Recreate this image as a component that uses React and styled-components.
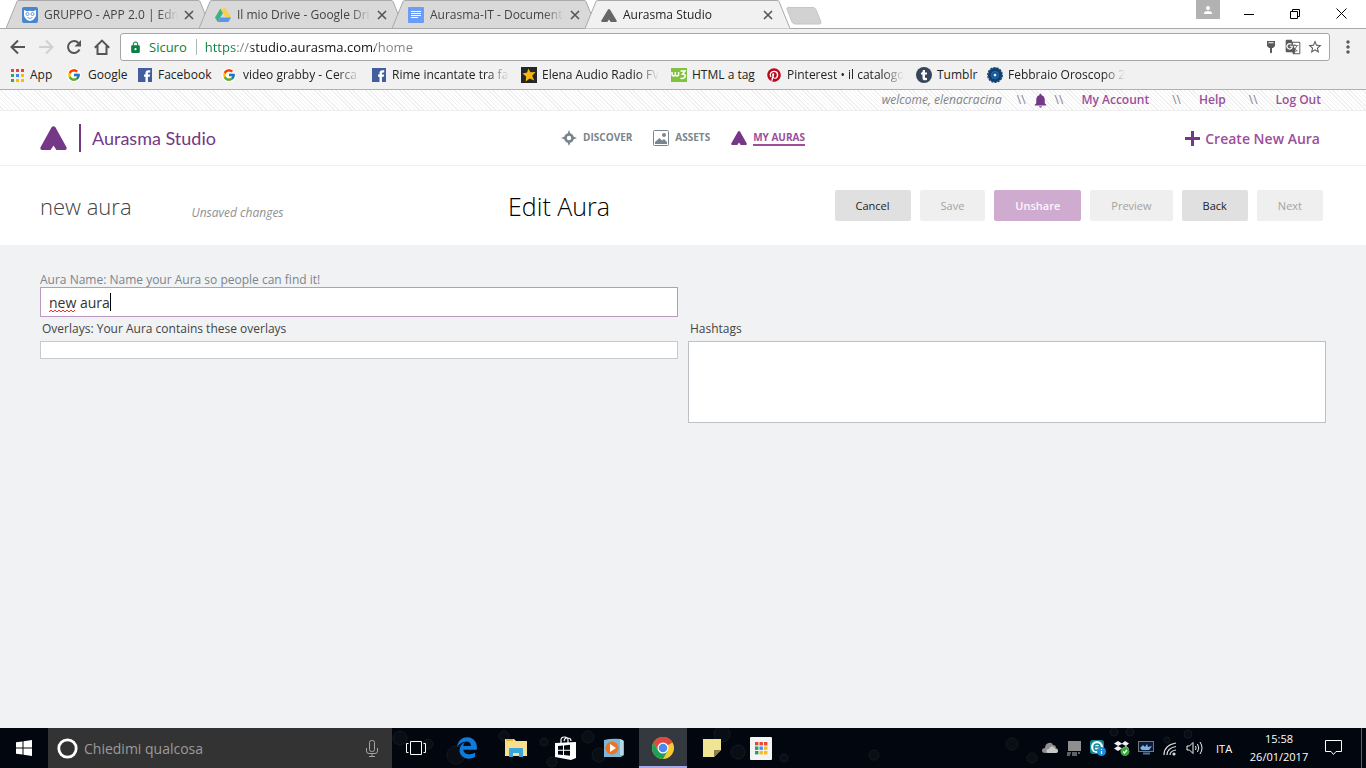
import React from "react";
import styled, { createGlobalStyle, css } from "styled-components";
import { FcGoogle } from "react-icons/fc";
import { FaPinterest, FaEdgeLegacy } from "react-icons/fa6";
import { MdLock, MdStarBorder, MdMoreVert, MdNotifications, MdPerson, MdGTranslate } from "react-icons/md";

const ui = `"Open Sans", "Noto Sans", sans-serif`;
const purple = "#743886";
const link = "#9b4f9b";

const Global = createGlobalStyle`
  * { box-sizing: border-box; }
  html, body, #root { height: 100%; }
  body { margin: 0; font-family: ${ui}; font-size: 12px; background: #f1f2f4; }
  button, input, textarea { font: inherit; }
  button { border: 0; padding: 0; background: none; color: inherit; }
  a { color: inherit; text-decoration: none; }
  ul { list-style: none; margin: 0; padding: 0; }
  svg { display: block; flex: none; }
`;

const Screen = styled.div`
  min-height: 100%;
  display: flex;
  flex-direction: column;
`;

/* ---------- browser chrome ---------- */

const TabStrip = styled.div`
  height: 29px;
  display: flex;
  justify-content: space-between;
  background: #fff;
  border-bottom: 1px solid #a9a9a9;
`;

const Tabs = styled.ul`
  display: flex;
  height: 29px;
  padding-left: 18px;
`;

const Tab = styled.li`
  position: relative;
  z-index: ${(p) => (p.$active ? 2 : 0)};
  width: 205px;
  height: 29px;
  margin-left: -12px;
  padding: 1px 17px 0 16px;
  display: flex;
  align-items: center;
  color: ${(p) => (p.$active ? "#222" : "#444")};
`;

const TabShape = styled.svg`
  position: absolute;
  inset: 0;
  z-index: -1;
`;

const TabTitle = styled.span`
  flex: 1;
  margin: 0 6px;
  overflow: hidden;
  white-space: nowrap;
  line-height: 16px;
  mask-image: linear-gradient(90deg, #000 calc(100% - 20px), transparent);
`;

const NewTab = styled.button`
  margin: 7px 0 0 -4px;
  height: 17px;
`;

const WindowControls = styled.div`
  display: flex;
  height: 28px;
  padding-right: 2px;
`;

const Profile = styled.button`
  width: 24px;
  height: 19px;
  margin-right: 6px;
  display: grid;
  place-items: center;
  color: #fff;
  background: #b2b2b2;
`;

const WindowButton = styled.button`
  width: 46px;
  height: 27px;
  display: grid;
  place-items: center;
`;

const Toolbar = styled.div`
  height: 36px;
  padding: 4px 10px 4px 10px;
  display: flex;
  align-items: center;
  background: #f1f1f1;
`;

const NavButton = styled.button`
  width: 16px;
  height: 16px;
  margin-right: 12px;
`;

const Omnibox = styled.div`
  flex: 1;
  height: 28px;
  margin: 0 10px 0 -2px;
  padding: 0 6px 0 8px;
  display: flex;
  align-items: center;
  background: #fff;
  border: 1px solid #a6a6a6;
  border-radius: 3px;
`;

const Secure = styled.span`
  margin-left: 7px;
  padding-right: 9px;
  font-size: 13px;
  line-height: 16px;
  color: #0b8043;
  border-right: 1px solid #b5b5b5;
`;

const Url = styled.input`
  flex: 1;
  margin-left: 8px;
  padding: 0;
  border: 0;
  outline: 0;
  font-size: 13px;
  line-height: 20px;
  color: transparent;
  background: linear-gradient(90deg, #0b8043 31px, #808080 31px 46px, #111 46px 170px, #808080 170px);
  background-clip: text;
`;

const OmniIcons = styled.div`
  display: flex;
  align-items: center;
  gap: 6px;
  color: #5a5a5a;
`;

const MenuButton = styled.button`
  width: 16px;
  color: #5a5a5a;
  display: grid;
  place-content: center;
`;

const Bookmarks = styled.ul`
  height: 25px;
  padding: 0 10px 4px;
  display: flex;
  align-items: center;
  background: #f1f1f1;
  border-bottom: 1px solid #b0b0b0;
`;

const Bookmark = styled.li`
  width: ${(p) => p.$w}px;
  a {
    display: flex;
    align-items: center;
    gap: 5px;
    color: #222;
    line-height: 16px;
  }
  span {
    flex: 1;
    margin-right: ${(p) => (p.$fade ? 12 : 0)}px;
    overflow: ${(p) => (p.$fade ? "hidden" : "visible")};
    white-space: nowrap;
    ${(p) => p.$fade && css`mask-image: linear-gradient(90deg, #000 calc(100% - 22px), transparent);`}
  }
`;

/* ---------- Aurasma page ---------- */

const Page = styled.div`
  flex: 1;
  display: flex;
  flex-direction: column;
`;

const UtilityBar = styled.nav`
  height: 21px;
  padding-right: 45px;
  display: flex;
  align-items: center;
  justify-content: flex-end;
  border-bottom: 1px solid #ededed;
  background: repeating-linear-gradient(45deg, #fff 0 2px, #f0f0f0 2px 3px);
  line-height: 16px;
`;

const Welcome = styled.em`
  color: #808488;
`;

const Slashes = styled.span`
  color: #8a7f95;
  margin: 0 ${(p) => p.$after}px 0 ${(p) => p.$before}px;
`;

const UtilityLink = styled.a`
  font-weight: 600;
  color: ${link};
`;

const Header = styled.header`
  height: 55px;
  padding: 0 40px;
  display: grid;
  grid-template-columns: 1fr auto 1fr;
  align-items: center;
  background: #fff;
  border-bottom: 1px solid #f1f1f1;
`;

const Brand = styled.a`
  display: flex;
  align-items: center;
  color: ${purple};
  font-family: Lato, sans-serif;
  font-size: 18px;
`;

const BrandRule = styled.i`
  width: 2px;
  height: 28px;
  margin: 0 11px 0 12px;
  background: ${purple};
`;

const MainNav = styled.nav`
  display: flex;
  gap: 21px;
`;

const NavItem = styled.a`
  display: flex;
  align-items: center;
  gap: 6px;
  font-size: 10px;
  font-weight: 700;
  line-height: 14px;
  color: ${(p) => (p.$active ? link : "#7b858d")};
  span {
    border-bottom: 2px solid ${(p) => (p.$active ? link : "transparent")};
  }
`;

const CreateLink = styled.a`
  justify-self: end;
  margin-right: 6px;
  display: flex;
  align-items: center;
  gap: 5px;
  color: ${link};
  font-size: 14px;
  font-weight: 600;
`;

const TitleBar = styled.div`
  height: 79px;
  padding: 0 43px 0 40px;
  display: flex;
  align-items: center;
  justify-content: space-between;
  background: #fff;
`;

const AuraTitle = styled.div`
  display: flex;
  align-items: center;
  gap: 60px;
  h2 {
    margin: 0;
    font-size: 22px;
    font-weight: 300;
    line-height: 28px;
    color: #444;
  }
  em {
    padding-top: 14px;
    color: #909090;
    line-height: 16px;
  }
`;

const PageTitle = styled.h1`
  margin: 0;
  font-size: 25px;
  font-weight: 300;
  line-height: 32px;
  color: #000;
`;

const Actions = styled.div`
  display: flex;
  gap: 9px;
`;

const tones = {
  normal: css`background: #e0e0e0; color: #222;`,
  off: css`background: #efefef; color: #a3a3a3;`,
  accent: css`background: #cfaccf; color: #fbf5fb; font-weight: 600;`,
};

const ActionButton = styled.button`
  height: 31px;
  padding: 0 21px;
  border-radius: 2px;
  font-size: 11px;
  ${(p) => tones[p.$tone]}
`;

const Form = styled.form`
  flex: 1;
  padding: 27px 40px 20px;
  display: grid;
  grid-template-columns: 1fr 1fr;
  grid-template-rows: auto auto;
  align-content: start;
  column-gap: 10px;
  background: #f1f2f4;
`;

const Field = styled.div`
  grid-column: ${(p) => p.$col};
  display: flex;
  flex-direction: column;
`;

const NameLabel = styled.label`
  line-height: 15px;
  color: #7b858d;
`;

const FieldLabel = styled.label`
  padding: 4px 2px;
  line-height: 16px;
  color: #444;
`;

const NameBox = styled.div`
  position: relative;
  input {
    display: block;
    width: 100%;
    height: 30px;
    padding: 0 8px;
    border: 1px solid #bb98c2;
    outline: 0;
    background: #fff;
    font-size: 14px;
    color: #333;
  }
`;

const Squiggle = styled.svg`
  position: absolute;
  left: 9px;
  top: 22px;
`;

const Caret = styled.i`
  position: absolute;
  left: 70px;
  top: 6px;
  width: 1px;
  height: 18px;
  background: #000;
`;

const OverlayBox = styled.output`
  height: 18px;
  background: #fff;
  border: 1px solid #c9cacc;
`;

const HashtagBox = styled.textarea`
  display: block;
  height: 82px;
  resize: none;
  background: #fff;
  border: 1px solid #bfc0c6;
  outline: 0;
`;

/* ---------- taskbar ---------- */

const TaskBar = styled.footer`
  position: relative;
  height: 40px;
  display: flex;
  background: #02060e;
  color: #fff;
`;

const Bubbles = styled.svg`
  position: absolute;
  left: 392px;
  top: 0;
`;

const Start = styled.button`
  width: 48px;
  display: grid;
  place-items: center;
`;

const Search = styled.label`
  width: 344px;
  padding: 0 14px 0 9px;
  display: flex;
  align-items: center;
  gap: 6px;
  background: #333;
  input {
    flex: 1;
    min-width: 0;
    padding: 0;
    border: 0;
    outline: 0;
    background: none;
    font-size: 14px;
    color: #fff;
  }
  input::placeholder { color: #9b9b9b; opacity: 1; }
`;

const Apps = styled.div`
  position: relative;
  display: flex;
  gap: 1px;
`;

const AppButton = styled.button`
  width: 48px;
  display: grid;
  place-items: center;
  background: ${(p) => (p.$active ? "#34383f" : "none")};
  box-shadow: ${(p) => (p.$active ? "inset 0 -2px #a7a8e8" : "none")};
`;

const Tray = styled.div`
  position: relative;
  margin-left: auto;
  display: flex;
  align-items: center;
`;

const TrayIcons = styled.div`
  display: flex;
  gap: 8px;
  margin-right: 12px;
`;

const Lang = styled.span`
  width: 18px;
  margin-right: 14px;
  font-size: 11px;
`;

const Clock = styled.time`
  width: 62px;
  margin-right: 15px;
  text-align: center;
  font-size: 11px;
  line-height: 18px;
`;

const ShowDesktop = styled.button`
  width: 5px;
  height: 40px;
  margin-left: 19px;
  border-left: 1px solid #5d6168;
`;

/* ---------- drawings ---------- */

const Aurasma = ({ w, h, color = purple }) => (
  <svg width={w} height={h} viewBox="0 0 28 24" preserveAspectRatio="none" fill={color}>
    <path d="M12 1.2Q14 -.8 16 1.2L27.6 21.6Q28 24 26 24H17L14 19.6 11 24H2Q0 24 .4 21.6z" />
  </svg>
);

const Close = () => (
  <svg width="10" height="10" viewBox="0 0 10 10" stroke="#555" strokeWidth="1.6"><path d="M1 1l8 8M9 1L1 9" /></svg>
);

const Edmodo = () => (
  <svg width="16" height="16" viewBox="0 0 16 16">
    <rect width="16" height="16" rx="2" fill="#4a86d0" />
    <path d="M2 3l3 1.200q3-.8 6 0L14 3v5q0 2-1.500 3.200Q11 14 8 14t-4.500-2.800Q2 10 2 8z" fill="#fff" />
    <circle cx="5.500" cy="7" r="1.500" fill="none" stroke="#4a86d0" strokeWidth=".8" />
    <circle cx="10.500" cy="7" r="1.500" fill="none" stroke="#4a86d0" strokeWidth=".8" />
    <path d="M5.500 10.500q2.500 2 5 0" fill="none" stroke="#4a86d0" strokeWidth=".8" />
  </svg>
);

const Drive = () => (
  <svg width="16" height="16" viewBox="0 0 16 16">
    <path d="M5.3 1.5L0 10.5 2.7 15 8 6z" fill="#3fb37f" />
    <path d="M5.3 1.5h5.4L16 10.3h-5.3z" fill="#fccf4b" />
    <path d="M5.4 10.5H16L13.3 15H2.7z" fill="#5b95ee" />
  </svg>
);

const Docs = () => (
  <svg width="16" height="16" viewBox="0 0 16 16">
    <rect width="16" height="16" rx="1" fill="#6a9df6" />
    <path d="M3 4.500h10M3 6.500h10M3 8.500h10M3 10.500h7" stroke="#fff" />
  </svg>
);

const gridColors = ["#ea4335", "#ea4335", "#ea4335", "#34a853", "#4285f4", "#fbbc05", "#34a853", "#fbbc05", "#fbbc05"];
const GridIcon = () => (
  <svg width="15" height="13" viewBox="-1 0 15 13">
    {gridColors.map((c, i) => <rect key={i} x={(i % 3) * 5} y={Math.floor(i / 3) * 5} width="3" height="3" fill={c} />)}
  </svg>
);

const Google = () => (
  <svg width="16" height="16" viewBox="0 0 16 16">
    <circle cx="7" cy="8" r="7" fill="#fff" />
    <FcGoogle x="0" y="1" width="14" height="14" size={14} />
  </svg>
);

const Facebook = () => (
  <svg width="15" height="14" viewBox="0 0 15 14">
    <rect width="14" height="14" fill="#425e9e" />
    <path d="M7.500 14V8.800H6V6.600h1.500V5q0-2.800 2.900-2.800h1.800v2.200h-1.300q-1 0-1 1v1.200h2.200l-.3 2.200H9.900V14z" fill="#fff" />
  </svg>
);

const StarIcon = () => (
  <svg width="16" height="16" viewBox="0 0 16 16">
    <rect width="16" height="16" fill="#25262a" />
    <path d="M7.200 1.500l2.300 3.800 5-.3-3.300 3.800 2 4.700-4.500-2-4 3 .4-5L1.500 6.400l4.700-.9z" fill="#f2b80f" />
  </svg>
);

const W3 = () => (
  <svg width="16" height="16" viewBox="0 0 16 16">
    <rect y="1" width="16" height="14" fill="#80c23d" />
    <path d="M1 5v2q0 2 1.700 2t1.600-2V5v2q0 2 1.700 2t1.600-2V5M9.500 4h4.500l-2.500 3q3 0 2.700 2.500Q13.500 12 9.500 11.200" fill="none" stroke="#fff" strokeWidth="1.500" />
  </svg>
);

const PinterestIcon = () => (
  <svg width="16" height="16" viewBox="0 0 16 16">
    <circle cx="8" cy="8" r="7" fill="#fff" />
    <FaPinterest x="1" y="1" size={14} color="#bd081c" />
  </svg>
);

const TumblrIcon = () => (
  <svg width="16" height="16" viewBox="0 0 16 16">
    <circle cx="8" cy="8" r="8" fill="#36465d" />
    <path d="M7 3h2v2.500h2v2H9v2.700q0 1.200 2 .6V13q-4.500 1.200-4.500-2.300V7.500H5V6q1.800-.7 2-3z" fill="#fff" />
  </svg>
);

const Zodiac = () => (
  <svg width="16" height="16" viewBox="0 0 16 16">
    <circle cx="8" cy="8" r="7.200" fill="#14406f" stroke="#1d4a7a" strokeWidth="1.500" strokeDasharray="2.200 1" />
    <circle cx="8" cy="8" r="4.500" fill="#1b6aae" stroke="#0d2d57" strokeDasharray="1 1" />
    <circle cx="8" cy="8" r="2.500" fill="#0d3c78" />
    <circle cx="8" cy="8" r="1.500" fill="#e6f2fb" />
  </svg>
);

const Discover = () => (
  <svg width="16" height="16" viewBox="0 0 16 16" fill="#7b858d">
    <path fillRule="evenodd" d="M8 0l1.300 3.200A5 5 0 0 1 12.800 6.700L16 8l-3.200 1.300A5 5 0 0 1 9.300 12.800L8 16l-1.300-3.200A5 5 0 0 1 3.200 9.300L0 8l3.200-1.300A5 5 0 0 1 6.700 3.200zM8 5.800a2.200 2.200 0 1 0 0 4.400 2.200 2.200 0 0 0 0-4.400z" />
  </svg>
);

const Assets = () => (
  <svg width="16" height="16" viewBox="0 0 16 16">
    <rect x=".5" y=".5" width="15" height="15" rx="1" fill="#fff" stroke="#7b858d" />
    <circle cx="11" cy="5" r="2" fill="#7b858d" />
    <path d="M2 14v-2l4.500-4L9 10.500l2-1.500 3 3v2z" fill="#7b858d" />
  </svg>
);

const Chrome = () => (
  <svg width="24" height="24" viewBox="0 0 24 24">
    <circle cx="12" cy="12" r="11" fill="#f7c934" />
    <path d="M12 12L2.500 6.500A11 11 0 0 1 21.500 6.500z" fill="#dd4b3e" />
    <path d="M12 6.500h9.500A11 11 0 0 0 2.500 6.500L7.200 14.700z" fill="#dd4b3e" />
    <path d="M2.500 6.500A11 11 0 0 0 12 23l4.700-8.200L7.200 14.700z" fill="#1da05a" />
    <circle cx="12" cy="12" r="5.500" fill="#fff" />
    <circle cx="12" cy="12" r="4.300" fill="#4a87ee" />
  </svg>
);

const Explorer = () => (
  <svg width="22" height="20" viewBox="0 0 22 20">
    <path d="M0 1h9l2 2h11v15H0z" fill="#f7df8d" />
    <path d="M1 1h7v2H1z" fill="#e9b72b" />
    <path d="M4 19v-8q0-1 1-1h12q1 0 1 1v8h-4v-4H8v4z" fill="#38a5dd" />
  </svg>
);

const Store = () => (
  <svg width="21" height="24" viewBox="0 0 21 24">
    <path d="M6 7V4q0-3 3.500-3T13 4v3M9 5q1-4 4-3 3 0 3 3" fill="none" stroke="#fff" strokeWidth="1.200" />
    <path d="M0 7l21-1v16l-5 2L0 21z" fill="#fff" />
    <path d="M3 10l5-.5v4.300H3zM9 9.400l6-.6v5H9zM3 14.700h5V19l-5-.5zM9 14.700h6v5l-6-.6z" fill="#02060e" />
  </svg>
);

const Player = () => (
  <svg width="20" height="20" viewBox="0 0 20 20">
    <path d="M0 2q8-2 17-1l3 2v14l-3 2H0z" fill="#7db8d8" />
    <path d="M16 2h3v15h-3z" fill="#b5d8e8" />
    <circle cx="8" cy="10" r="6.500" fill="#ed7421" />
    <path d="M6 6l6 4-6 4z" fill="#fff" />
  </svg>
);

const Notes = () => (
  <svg width="18" height="18" viewBox="0 0 18 18">
    <path d="M0 0h18v11l-7 7H0z" fill="#f0e594" /><path d="M11 11h7l-7 7z" fill="#877f4c" />
  </svg>
);

const AppGrid = () => (
  <svg width="22" height="23" viewBox="0 0 22 23">
    <rect width="22" height="23" rx="1" fill="#f4f4f4" />
    {["#e04a3b", "#e04a3b", "#e04a3b", "#1ea362", "#4a8af4", "#f9ba18", "#1ea362", "#f9ba18", "#f9ba18"].map((c, i) => (
      <rect key={i} x={5 + (i % 3) * 4.500} y={5 + Math.floor(i / 3) * 4.500} width="3.400" height="3.400" fill={c} />
    ))}
  </svg>
);

const TaskView = () => (
  <svg width="20" height="14" viewBox="0 0 20 14" fill="none" stroke="#fff">
    <path d="M4.500.5h11v13h-11zM2.500 2.500H.5v9h2M17.500 2.500h2v9h-2" />
  </svg>
);

/* ---------- data ---------- */

const tabs = [
  { title: "GRUPPO - APP 2.0 | Edm", icon: <Edmodo /> },
  { title: "Il mio Drive - Google Driv", icon: <Drive /> },
  { title: "Aurasma-IT - Documenti", icon: <Docs /> },
  { title: "Aurasma Studio", icon: <Aurasma w={16} h={13} color="#666" />, active: true },
];

const bookmarks = [
  { text: "App", w: 57, icon: <GridIcon /> },
  { text: "Google", w: 71, icon: <Google /> },
  { text: "Facebook", w: 84, icon: <Facebook /> },
  { text: "video grabby - Cerca c", w: 150, icon: <Google />, fade: true },
  { text: "Rime incantate tra fan", w: 149, icon: <Facebook />, fade: true },
  { text: "Elena Audio Radio FVG", w: 150, icon: <StarIcon />, fade: true },
  { text: "HTML a tag", w: 95, icon: <W3 /> },
  { text: "Pinterest • il catalogo", w: 150, icon: <PinterestIcon />, fade: true },
  { text: "Tumblr", w: 71, icon: <TumblrIcon /> },
  { text: "Febbraio Oroscopo 20", w: 150, icon: <Zodiac />, fade: true },
];

const actions = [
  ["Cancel", "normal"], ["Save", "off"], ["Unshare", "accent"],
  ["Preview", "off"], ["Back", "normal"], ["Next", "off"],
];

const bubbles = [
  [8, 10, 7], [36, 16, 5], [64, 27, 9], [74, 19, 6], [112, 8, 5], [152, 14, 4], [160, 34, 5], [196, 9, 6], [207, 27, 7],
  [330, 6, 8], [346, 24, 7], [392, 30, 4], [482, 27, 5], [620, 16, 6],
  [640, 30, 5], [722, 4, 4], [738, 4, 4], [796, 6, 4], [775, 12, 3],
];

export default function App() {
  return (
    <Screen>
      <Global />
      <div>
        <TabStrip>
          <Tabs>
            {tabs.map((t) => (
              <Tab key={t.title} $active={t.active}>
                <TabShape width="205" height="29" viewBox="0 0 205 29">
                  <path d="M0 28.500L11 1.500Q12 .5 13 .5H192Q193 .5 194 1.500L205 28.500" fill={t.active ? "#f1f1f1" : "#d9d9d9"} stroke="#a9a9a9" />
                  {!t.active && <path d="M0 28.500H205" stroke="#a9a9a9" />}
                </TabShape>
                {t.icon}
                <TabTitle>{t.title}</TabTitle>
                <button aria-label="Close tab"><Close /></button>
              </Tab>
            ))}
            <li>
              <NewTab aria-label="New tab">
                <svg width="36" height="18" viewBox="0 0 36 18"><path d="M2 .5H27Q29 .5 30 2.500L35 15Q35.500 17 33.500 17H9Q7 17 6 15L1 2.500Q.5.5 2 .5z" fill="#d2d2d2" stroke="#c6c6c6" /></svg>
              </NewTab>
            </li>
          </Tabs>
          <WindowControls>
            <Profile aria-label="Profile"><MdPerson size={12} /></Profile>
            <WindowButton aria-label="Minimize"><svg width="10" height="10"><path d="M0 5.500h10" stroke="#000" /></svg></WindowButton>
            <WindowButton aria-label="Restore"><svg width="10" height="10" fill="none" stroke="#000"><path d="M.5 2.500h7v7h-7zM2.500 2.500v-2h7v7h-2" /></svg></WindowButton>
            <WindowButton aria-label="Close"><svg width="11" height="11" stroke="#000"><path d="M.5.5l10 10M10.500.5l-10 10" /></svg></WindowButton>
          </WindowControls>
        </TabStrip>

        <Toolbar>
          <NavButton aria-label="Back"><svg width="16" height="16" fill="none" stroke="#555" strokeWidth="2"><path d="M15 8H2M8 1.500L1.500 8 8 14.500" /></svg></NavButton>
          <NavButton aria-label="Forward"><svg width="16" height="16" fill="none" stroke="#d0d0d0" strokeWidth="2"><path d="M1 8h13M8 1.500L14.500 8 8 14.500" /></svg></NavButton>
          <NavButton aria-label="Reload"><svg width="16" height="16"><path d="M13.500 10.500A6 6 0 1 1 12.500 4" fill="none" stroke="#555" strokeWidth="2" /><path d="M15 1v6.500H8.500z" fill="#555" /></svg></NavButton>
          <NavButton aria-label="Home"><svg width="16" height="16" fill="none" stroke="#555" strokeWidth="2"><path d="M.8 8.800L8 1.600l7.200 7.200M3.500 7v8h9V7" /></svg></NavButton>
          <Omnibox>
            <MdLock size={13} color="#0b8043" />
            <Secure>Sicuro</Secure>
            <Url aria-label="Address" defaultValue="https://studio.aurasma.com/home" />
            <OmniIcons>
              <svg width="16" height="14" viewBox="-3 0 16 14" fill="#5a5a5a"><path fillRule="evenodd" d="M1 1h8v5L7 8H6v4.500L5 13.500 4 12.500V8H3L1 6zM2.500 2.300v1h5v-1z" /></svg>
              <MdGTranslate size={16} />
              <MdStarBorder size={16} />
            </OmniIcons>
          </Omnibox>
          <MenuButton aria-label="Menu"><MdMoreVert size={20} /></MenuButton>
        </Toolbar>

        <Bookmarks>
          {bookmarks.map((b) => (
            <Bookmark key={b.text} $w={b.w} $fade={b.fade}>
              <a href="#">{b.icon}<span>{b.text}</span></a>
            </Bookmark>
          ))}
        </Bookmarks>
      </div>

      <Page>
        <UtilityBar>
          <Welcome>welcome, elenacracina</Welcome>
          <Slashes $before={15} $after={6}>\\</Slashes>
          <MdNotifications size={17} color={purple} />
          <Slashes $before={6} $after={18}>\\</Slashes>
          <UtilityLink href="#">My Account</UtilityLink>
          <Slashes $before={23} $after={18}>\\</Slashes>
          <UtilityLink href="#">Help</UtilityLink>
          <Slashes $before={23} $after={18}>\\</Slashes>
          <UtilityLink href="#">Log Out</UtilityLink>
        </UtilityBar>

        <Header>
          <Brand href="#"><Aurasma w={27} h={24} /><BrandRule />Aurasma Studio</Brand>
          <MainNav>
            <NavItem href="#"><Discover /><span>DISCOVER</span></NavItem>
            <NavItem href="#"><Assets /><span>ASSETS</span></NavItem>
            <NavItem href="#" $active><Aurasma w={16} h={14} /><span>MY AURAS</span></NavItem>
          </MainNav>
          <CreateLink href="#">
            <svg width="15" height="15" fill={purple}><path d="M6 0h3v6h6v3H9v6H6V9H0V6h6z" /></svg>
            Create New Aura
          </CreateLink>
        </Header>

        <TitleBar>
          <AuraTitle><h2>new aura</h2><em>Unsaved changes</em></AuraTitle>
          <PageTitle>Edit Aura</PageTitle>
          <Actions>
            {actions.map(([label, tone]) => <ActionButton key={label} $tone={tone}>{label}</ActionButton>)}
          </Actions>
        </TitleBar>

        <Form>
          <Field $col="1">
            <NameLabel htmlFor="aura-name">Aura Name: Name your Aura so people can find it!</NameLabel>
            <NameBox>
              <input id="aura-name" defaultValue="new aura" spellCheck="false" />
              <Squiggle width="27" height="4" fill="none" stroke="#e33"><path d="M0 3L2 1 4 3 6 1 8 3 10 1 12 3 14 1 16 3 18 1 20 3 22 1 24 3 26 1" /></Squiggle>
              <Caret />
            </NameBox>
          </Field>
          <Field $col="1">
            <FieldLabel htmlFor="overlays">Overlays: Your Aura contains these overlays</FieldLabel>
            <OverlayBox id="overlays" />
          </Field>
          <Field $col="2">
            <FieldLabel htmlFor="hashtags">Hashtags</FieldLabel>
            <HashtagBox id="hashtags" />
          </Field>
        </Form>
      </Page>

      <TaskBar>
        <Bubbles width="960" height="40" fill="#090d14" stroke="#151a22">
          {bubbles.map(([x, y, r]) => <circle key={x} cx={x} cy={y} r={r} />)}
        </Bubbles>
        <Start aria-label="Start">
          <svg width="16" height="16" fill="#fff"><path d="M0 2.300L6.500 1.400V7.500H0zM7.500 1.200L16 0v7.500H7.500zM0 8.500h6.500v6.100L0 13.700zM7.500 8.500H16V16l-8.500-1.200z" /></svg>
        </Start>
        <Search>
          <svg width="21" height="21" viewBox="0 0 21 21"><circle cx="10.500" cy="10.500" r="8.700" fill="none" stroke="#fff" strokeWidth="2.800" /></svg>
          <input aria-label="Cerca" placeholder="Chiedimi qualcosa" />
          <svg width="12" height="17" fill="none" stroke="#a5a5a5"><path d="M3.500 2.500q0-2 2-2h1q2 0 2 2v7q0 2-2 2h-1q-2 0-2-2zM.5 8v3q0 2.500 2.500 2.500h6q2.500 0 2.500-2.500V8M6 13.500v3M3 16.500h6" /></svg>
        </Search>
        <Apps>
          <AppButton aria-label="Task view"><TaskView /></AppButton>
          <i />
          <i />
          <AppButton aria-label="Edge"><FaEdgeLegacy size={22} color="#0f7bdc" /></AppButton>
          <AppButton aria-label="Explorer"><Explorer /></AppButton>
          <AppButton aria-label="Store"><Store /></AppButton>
          <AppButton aria-label="Media Player"><Player /></AppButton>
          <AppButton aria-label="Chrome" $active><Chrome /></AppButton>
          <AppButton aria-label="Sticky Notes"><Notes /></AppButton>
          <AppButton aria-label="App launcher"><AppGrid /></AppButton>
        </Apps>
        <Tray>
          <TrayIcons>
            <svg width="16" height="16" viewBox="0 0 16 16"><path d="M3 13q-3 0-3-2.500T3 8q0-4 3.500-5Q10 2 11 5q3 0 3 3 2 .5 2 2.500T13.500 13z" fill="#8f8f8f" /><path d="M6 13q-2-.5-1.500-2.500T7 9q1-3 3.500-2.500T13 9q3 0 3 2t-2 2z" fill="#c9c9c9" /></svg>
            <svg width="16" height="16" viewBox="0 0 16 16"><path d="M2 1h13v10H2z" fill="#8e8e8e" /><path d="M1 13h4M6 13h5M1 15h3M6 15h5M12 13h2" stroke="#bbb" /></svg>
            <svg width="16" height="16" viewBox="0 0 16 16"><rect width="14" height="14" rx="3" fill="#128b92" /><circle cx="7" cy="7" r="6" fill="#fff" /><path d="M4 7h6q0-3-3-3T4 7.500 7 10h3" fill="none" stroke="#128b92" strokeWidth="1.600" /><circle cx="11.500" cy="11.500" r="4.500" fill="#1b8fdc" /><path d="M11.500 9v1M11.500 11v3" stroke="#fff" strokeWidth="1.200" /></svg>
            <svg width="16" height="16" viewBox="0 0 16 16"><path d="M4 1L0 3.500 4 6 0 8.500 4 11l4-2.500L12 11l3-2.500L12 6l3-2.500L11 1 8 3.500zM8 4l4 2-4 2.300L4 6z" fill="#f2f2f2" fillRule="evenodd" /><circle cx="11" cy="11.500" r="4.500" fill="#37a83c" /><path d="M9 11.500l1.500 1.500 2.500-3" fill="none" stroke="#fff" strokeWidth="1.300" /></svg>
            <svg width="16" height="16" viewBox="0 0 16 16"><rect x=".5" y="1.500" width="15" height="10" fill="#0d1a38" stroke="#777" /><path d="M2 8l3-3 2 2 2-3 1 3 4-1-3 4H4z" fill="#7fb4e6" /><path d="M5 13.500h7" stroke="#4775a5" strokeWidth="2" /></svg>
            <svg width="16" height="16" viewBox="0 0 16 16" fill="none" stroke="#ddd" strokeWidth="1.200"><path d="M2 15Q2 5 14 3M5 15q0-7 9-8.500M8 15q0-4 6-5" /><circle cx="12" cy="14" r="1" fill="#ddd" /></svg>
            <svg width="18" height="16" viewBox="0 0 18 16" fill="none" stroke="#eee"><path d="M1 6v4h2.500L7 13.500v-11L3.500 6zM9.500 6q1.200 2 0 4M11.500 4q2.500 4 0 8M14 2q4 6 0 12" /></svg>
          </TrayIcons>
          <Lang>ITA</Lang>
          <Clock>15:58<br />26/01/2017</Clock>
          <svg width="17" height="16" viewBox="0 0 17 16" fill="none" stroke="#fff"><path d="M.5.5h16v11H11L8.500 14.500 6 11.500H.5z" /></svg>
          <ShowDesktop aria-label="Show desktop" />
        </Tray>
      </TaskBar>
    </Screen>
  );
}
